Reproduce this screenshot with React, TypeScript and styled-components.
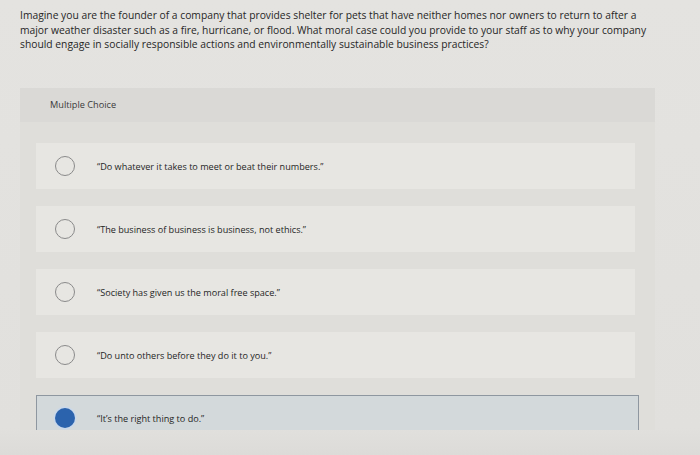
import React from "react";
import styled, { createGlobalStyle } from "styled-components";

const GlobalStyle = createGlobalStyle`
  html, body {
    margin: 0;
    padding: 0;
    background: #e2e1de;
  }
  body {
    font-family: "Open Sans", Lato, "Liberation Sans", sans-serif;
    color: #2c2c2c;
  }
`;

const Page = styled.div`
  width: 700px;
  height: 455px;
  overflow: hidden;
  display: flex;
  flex-direction: column;
  background: linear-gradient(180deg, #e4e3e0 0%, #e1e0dd 94%, #dcdbd8 100%);
`;

const Question = styled.p`
  margin: 0;
  padding: 8px 40px 0 20px;
  height: 88px;
  box-sizing: border-box;
  font-size: 10.3px;
  line-height: 14.5px;
  color: #262626;
`;

const Panel = styled.section`
  margin-left: 20px;
  width: 635px;
  height: 342px;
  overflow: hidden;
  background: #dfdeda;
  display: flex;
  flex-direction: column;
`;

const PanelHeader = styled.div`
  height: 34px;
  flex-shrink: 0;
  display: flex;
  align-items: center;
  padding-left: 30px;
  padding-bottom: 2px;
  box-sizing: border-box;
  background: #dad9d6;
  font-size: 9.2px;
  color: #3a3a3a;
`;

const Options = styled.div`
  display: flex;
  flex-direction: column;
  gap: 17px;
  padding: 21px 20px 0 16px;
`;

const Row = styled.div<{ $selected?: boolean }>`
  height: 46px;
  flex-shrink: 0;
  display: flex;
  align-items: center;
  box-sizing: border-box;
  padding-left: ${(p) => (p.$selected ? "18px" : "19px")};
  margin-right: ${(p) => (p.$selected ? "-4px" : "0")};
  background: ${(p) => (p.$selected ? "#d3d9db" : "#e7e6e2")};
  border: ${(p) => (p.$selected ? "1px solid #8e97a0" : "none")};
`;

const Radio = styled.span<{ $checked?: boolean }>`
  width: 20px;
  height: 20px;
  border-radius: 50%;
  box-sizing: border-box;
  flex-shrink: 0;
  border: ${(p) => (p.$checked ? "none" : "1.5px solid #8a8a8a")};
  background: ${(p) => (p.$checked ? "#2b63ad" : "transparent")};
  box-shadow: ${(p) => (p.$checked ? "0 0 0 1.5px #c9d8ea" : "none")};
`;

const Label = styled.span`
  margin-left: 22px;
  font-size: 9.1px;
  color: #252525;
`;

const options = [
  "\u201CDo whatever it takes to meet or beat their numbers.\u201D",
  "\u201CThe business of business is business, not ethics.\u201D",
  "\u201CSociety has given us the moral free space.\u201D",
  "\u201CDo unto others before they do it to you.\u201D",
  "\u201CIt\u2019s the right thing to do.\u201D",
];

const selected = 4;

export default function App() {
  return (
    <Page>
      <GlobalStyle />
      <Question>
        Imagine you are the founder of a company that provides shelter for pets
        that have neither homes nor owners to return to after a major weather
        disaster such as a fire, hurricane, or flood. What moral case could you
        provide to your staff as to why your company should engage in socially
        responsible actions and environmentally sustainable business practices?
      </Question>
      <Panel>
        <PanelHeader>Multiple Choice</PanelHeader>
        <Options>
          {options.map((text, i) => (
            <Row key={i} $selected={i === selected}>
              <Radio $checked={i === selected} />
              <Label>{text}</Label>
            </Row>
          ))}
        </Options>
      </Panel>
    </Page>
  );
}
